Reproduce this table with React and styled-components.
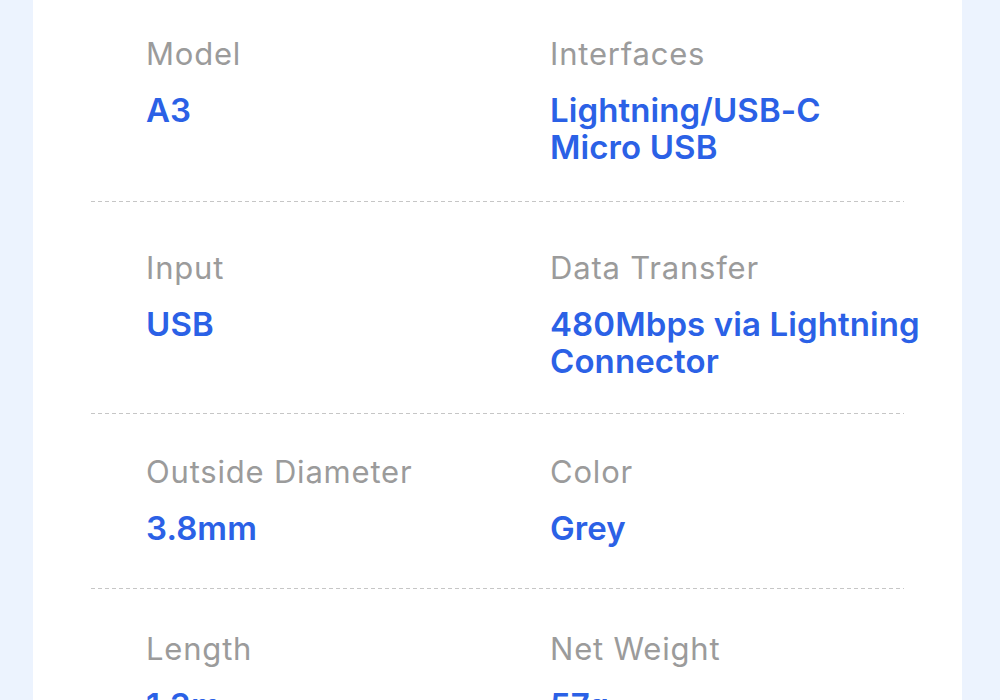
import React from "react";
import styled, { createGlobalStyle } from "styled-components";

const GlobalStyle = createGlobalStyle`
  html, body {
    margin: 0;
    padding: 0;
    background: #ecf3fe;
    font-family: Inter, "Noto Sans", sans-serif;
  }
`;

const Page = styled.div`
  height: 700px;
  overflow: hidden;
  padding: 0 38px 0 33px;
  background: #ecf3fe;
`;

const Card = styled.div`
  background: #ffffff;
  min-height: 760px;
  padding: 0 58px;
`;

const Row = styled.div`
  display: grid;
  grid-template-columns: 404px 1fr;
  padding: ${(p) => p.$pt}px 0 ${(p) => p.$pb}px 55px;
`;

const Cell = styled.div`
  display: flex;
  flex-direction: column;
`;

const Label = styled.div`
  font-size: 31px;
  line-height: 36px;
  color: #9b9b9b;
  font-weight: 400;
  letter-spacing: 0.8px;
`;

const Value = styled.div`
  margin-top: 20px;
  font-size: 33px;
  line-height: 37px;
  font-weight: 600;
  color: #2b61e6;
  letter-spacing: 0.1px;
  white-space: nowrap;
`;

const Divider = styled.div`
  height: 1px;
  background: repeating-linear-gradient(
    to right,
    #c6c6c6 0 4px,
    transparent 4px 7px
  );
`;

const rows = [
  {
    pt: 36,
    pb: 35,
    cells: [
      { label: "Model", value: ["A3"] },
      { label: "Interfaces", value: ["Lightning/USB-C", "Micro USB"] },
    ],
  },
  {
    pt: 48,
    pb: 33,
    cells: [
      { label: "Input", value: ["USB"] },
      { label: "Data Transfer", value: ["480Mbps via Lightning", "Connector"] },
    ],
  },
  {
    pt: 40,
    pb: 41,
    cells: [
      { label: "Outside Diameter", value: ["3.8mm"] },
      { label: "Color", value: ["Grey"] },
    ],
  },
  {
    pt: 42,
    pb: 40,
    last: true,
    cells: [
      { label: "Length", value: ["1.3m"] },
      { label: "Net Weight", value: ["57g"] },
    ],
  },
];

export default function App() {
  return (
    <>
      <GlobalStyle />
      <Page>
        <Card>
          {rows.map((r, i) => (
            <React.Fragment key={i}>
              <Row $pt={r.pt} $pb={r.pb}>
                {r.cells.map((c) => (
                  <Cell key={c.label}>
                    <Label>{c.label}</Label>
                    <Value>
                      {c.value.map((v, j) => (
                        <div key={j}>{v}</div>
                      ))}
                    </Value>
                  </Cell>
                ))}
              </Row>
              {!r.last && <Divider />}
            </React.Fragment>
          ))}
        </Card>
      </Page>
    </>
  );
}
